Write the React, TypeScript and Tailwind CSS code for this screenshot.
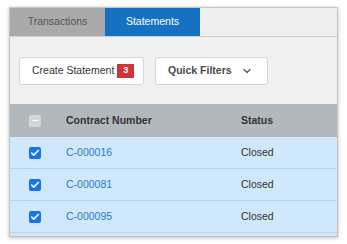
import { ChevronDown, Check, Minus } from 'lucide-react';

const rows = ['C-000016', 'C-000081', 'C-000095'];

export default function App() {
  return (
    <div className="h-[244px] w-[347px] bg-white pt-[7px] pl-[9px] font-['Liberation_Sans',Arial,sans-serif]">
      <div className="w-[329px] h-[230px] border border-[#c4c4c4] bg-[#f0f0f0] shadow-[0_1px_4px_rgba(0,0,0,0.25)] flex flex-col overflow-hidden">
        {/* Tabs */}
        <div className="flex h-[29px] border-b border-[#d0d0d0] bg-[#efefef] shrink-0">
          <div className="w-[95px] bg-[#aaaaaa] text-[#555] text-[10.5px] flex items-center justify-center">
            Transactions
          </div>
          <div className="w-[95px] bg-[#1672c0] text-white text-[10.5px] flex items-center justify-center">
            Statements
          </div>
        </div>

        {/* Toolbar */}
        <div className="flex items-center gap-[11px] pl-[9px] h-[67px] shrink-0">
          <button className="h-[28px] w-[125px] bg-white border border-[#d6d6d6] rounded-[3px] flex items-center pl-[12px] gap-[3px] text-[10.5px] text-[#333]">
            Create Statement
            <span className="bg-[#c9363c] text-white text-[9px] font-bold w-[17px] h-[14px] flex items-center justify-center">3</span>
          </button>
          <button className="h-[28px] w-[113px] bg-white border border-[#d6d6d6] rounded-[3px] flex items-center pl-[12px] gap-[9px] text-[10.5px] font-bold text-[#4a4a4a]">
            Quick Filters
            <ChevronDown className="w-[12px] h-[12px] text-[#555]" strokeWidth={2.5} />
          </button>
        </div>

        {/* Table */}
        <div className="flex-1 flex flex-col">
          <div className="flex items-center h-[33px] bg-[#b2b9bd] text-[10.5px] font-bold text-[#333] shrink-0">
            <div className="w-[56px] pl-[19px]">
              <div className="w-[12px] h-[12px] rounded-[2px] bg-[#d3d7d9] flex items-center justify-center">
                <Minus className="w-[9px] h-[9px] text-white" strokeWidth={3} />
              </div>
            </div>
            <div className="w-[175px]">Contract Number</div>
            <div>Status</div>
          </div>
          {rows.map((r) => (
            <div key={r} className="flex items-center h-[32px] bg-[#cfe8fc] border-b border-[#b9d3e6] text-[10.5px] shrink-0">
              <div className="w-[56px] pl-[19px]">
                <div className="w-[12px] h-[12px] rounded-[2px] bg-[#1a74e8] flex items-center justify-center">
                  <Check className="w-[10px] h-[10px] text-white" strokeWidth={4} />
                </div>
              </div>
              <div className="w-[175px] text-[#2a78c5]">{r}</div>
              <div className="text-[#333]">Closed</div>
            </div>
          ))}
          <div className="flex-1 bg-[#cfe8fc]" />
        </div>
      </div>
    </div>
  );
}
